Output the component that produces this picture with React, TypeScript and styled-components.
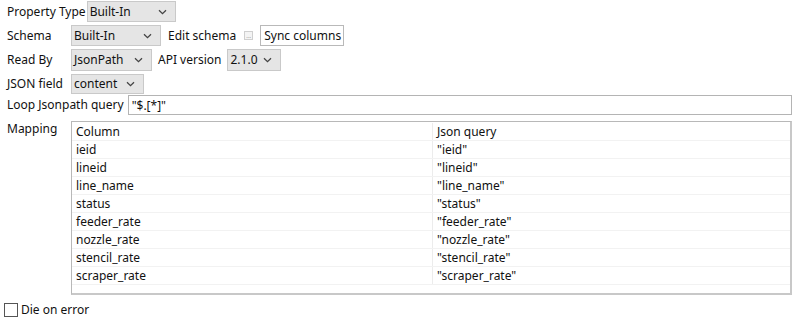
import React from "react";
import styled, { createGlobalStyle } from "styled-components";

const Global = createGlobalStyle`
  html, body { margin: 0; padding: 0; background: #fff; }
  body { font-family: "Noto Sans", "Open Sans", sans-serif; font-size: 12px; color: #111; }
`;

const Page = styled.div`
  width: 799px;
  height: 318px;
  padding: 1px 7px 0 7px;
  box-sizing: border-box;
  display: flex;
  flex-direction: column;
`;

const Row = styled.div<{ $h?: number; $mt?: number }>`
  display: flex;
  align-items: center;
  height: ${(p) => p.$h ?? 21}px;
  margin-top: ${(p) => p.$mt ?? 0}px;
`;

const Label = styled.span<{ $w?: number; $ml?: number }>`
  width: ${(p) => (p.$w ? `${p.$w}px` : "auto")};
  margin-left: ${(p) => p.$ml ?? 0}px;
  flex: none;
  white-space: nowrap;
  line-height: 18px;
`;

const ComboBox = styled.div<{ $w: number; $ml?: number }>`
  width: ${(p) => p.$w}px;
  height: 100%;
  margin-left: ${(p) => p.$ml ?? 0}px;
  box-sizing: border-box;
  background: #e5e5e5;
  border: 1px solid #c9c9c9;
  display: flex;
  align-items: center;
  justify-content: space-between;
  padding: 0 8px 0 2px;
  flex: none;
`;

const ComboText = styled.span`
  line-height: 18px;
`;

const Chevron = () => (
  <svg width="9" height="6" viewBox="0 0 9 6">
    <path d="M1 1.2 L4.5 4.6 L8 1.2" fill="none" stroke="#444" strokeWidth="1.3" />
  </svg>
);

const Combo = ({ w, ml, text }: { w: number; ml?: number; text: string }) => (
  <ComboBox $w={w} $ml={ml}>
    <ComboText>{text}</ComboText>
    <Chevron />
  </ComboBox>
);

const DotsButton = styled.span`
  width: 9px;
  height: 9px;
  box-sizing: border-box;
  border: 1px solid #cfcfcf;
  background: #f4f4f4;
  margin: 0 7px 0 8px;
  flex: none;
  display: flex;
  align-items: flex-end;
  justify-content: center;
  font-size: 6px;
  line-height: 6px;
  color: #888;
`;

const SyncButton = styled.div`
  height: 21px;
  box-sizing: border-box;
  border: 1px solid #b9b9b9;
  background: #fff;
  padding: 0 2px 0 3px;
  display: flex;
  align-items: center;
  white-space: nowrap;
`;

const TextInput = styled.div`
  flex: 1;
  height: 20px;
  box-sizing: border-box;
  border: 1px solid #b4b4b4;
  background: #fff;
  margin-left: 4px;
  padding: 0 3px;
  display: flex;
  align-items: center;
`;

const MappingRow = styled.div`
  display: flex;
  align-items: flex-start;
  margin-top: 6px;
`;

const MapLabel = styled.span`
  width: 64px;
  flex: none;
  line-height: 18px;
  margin-top: -1px;
`;

const Table = styled.div`
  width: 721px;
  height: 174px;
  box-sizing: border-box;
  border: 1px solid #b8b8b8;
  border-right: 2px solid #c8c8c8;
  border-bottom: 2px solid #c8c8c8;
  background: #fff;
  padding-top: 1px;
  display: flex;
  flex-direction: column;
`;

const TRow = styled.div`
  display: grid;
  grid-template-columns: 360px 1fr;
  height: 18px;
  box-sizing: border-box;
  border-bottom: 1px solid #f2f2f2;
  flex: none;
`;

const Cell = styled.div<{ $divider?: boolean }>`
  padding-left: 4px;
  line-height: 17px;
  white-space: nowrap;
  border-left: ${(p) => (p.$divider ? "1px solid #ececec" : "none")};
`;

const ErrorRow = styled.div`
  display: flex;
  align-items: center;
  margin-top: 6px;
  margin-left: -3px;
  gap: 3px;
`;

const Check = styled.span`
  width: 14px;
  height: 14px;
  box-sizing: border-box;
  border: 1px solid #555;
  background: #fff;
  flex: none;
`;

const rows: [string, string][] = [
  ["Column", "Json query"],
  ["ieid", '"ieid"'],
  ["lineid", '"lineid"'],
  ["line_name", '"line_name"'],
  ["status", '"status"'],
  ["feeder_rate", '"feeder_rate"'],
  ["nozzle_rate", '"nozzle_rate"'],
  ["stencil_rate", '"stencil_rate"'],
  ["scraper_rate", '"scraper_rate"'],
];

export default function App() {
  return (
    <>
      <Global />
      <Page>
        <Row>
          <Label>Property Type</Label>
          <Combo w={89} ml={1} text="Built-In" />
        </Row>
        <Row $mt={3}>
          <Label $w={64}>Schema</Label>
          <Combo w={90} text="Built-In" />
          <Label $ml={7}>Edit schema</Label>
          <DotsButton>...</DotsButton>
          <SyncButton>Sync columns</SyncButton>
        </Row>
        <Row $mt={3} $h={22}>
          <Label $w={64}>Read By</Label>
          <Combo w={81} text="JsonPath" />
          <Label $ml={6}>API version</Label>
          <Combo w={54} ml={6} text="2.1.0" />
        </Row>
        <Row $mt={3} $h={20}>
          <Label $w={64}>JSON field</Label>
          <Combo w={73} text="content" />
        </Row>
        <Row $mt={1} $h={20}>
          <Label>Loop Jsonpath query</Label>
          <TextInput>"$.[*]"</TextInput>
        </Row>
        <MappingRow>
          <MapLabel>Mapping</MapLabel>
          <Table>
            {rows.map(([a, b]) => (
              <TRow key={a}>
                <Cell>{a}</Cell>
                <Cell $divider>{b}</Cell>
              </TRow>
            ))}
          </Table>
        </MappingRow>
        <ErrorRow>
          <Check />
          <span>Die on error</span>
        </ErrorRow>
      </Page>
    </>
  );
}
